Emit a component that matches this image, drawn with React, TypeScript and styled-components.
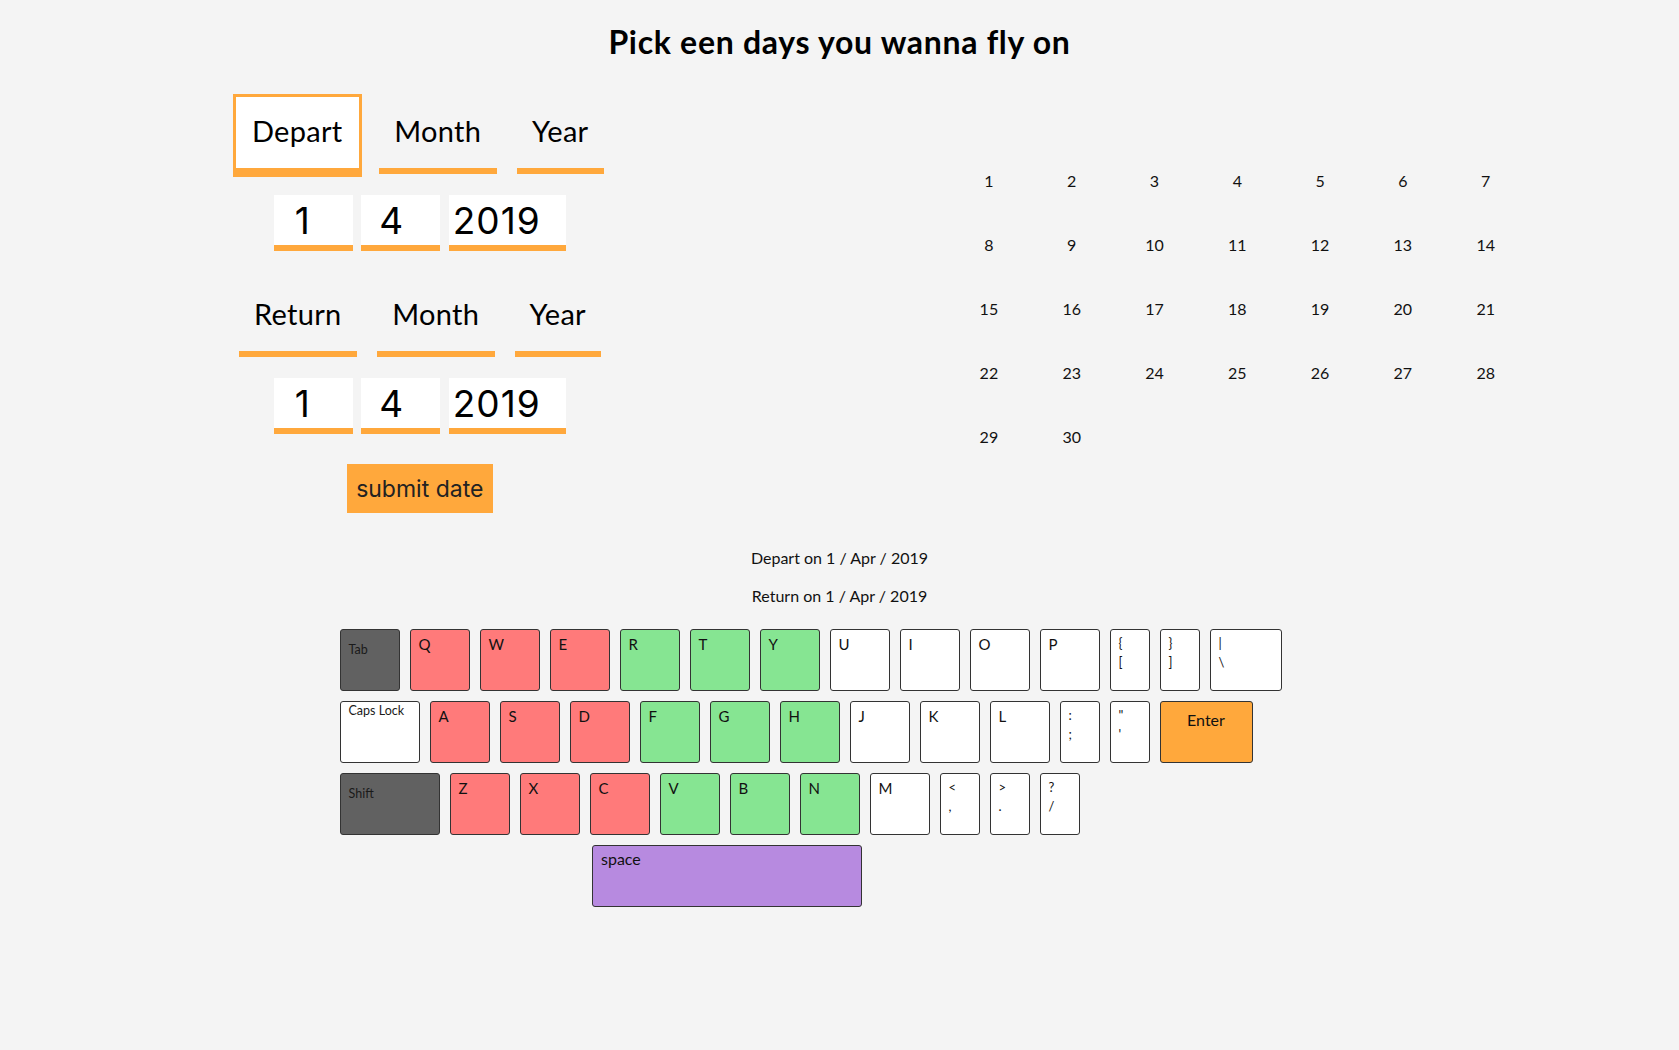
import styled, { createGlobalStyle } from 'styled-components'

const orange = '#ffa83c'

type Tone = 'dark' | 'red' | 'green' | 'white' | 'orange' | 'purple'

const toneColors: Record<Tone, string> = {
  dark: '#616161',
  red: '#ff7a7a',
  green: '#86e592',
  white: '#ffffff',
  orange: orange,
  purple: '#b78ae0',
}

const GlobalStyle = createGlobalStyle`
  body {
    margin: 0;
    background: #f4f4f4;
    font-family: Lato, 'Noto Sans', sans-serif;
    color: #111;
  }
`

const Page = styled.div`
  min-height: 1050px;
`

const Title = styled.h1`
  margin: 22px 0 0;
  font-size: 32px;
  line-height: 40px;
  font-weight: 700;
  letter-spacing: 0.7px;
  text-align: center;
  color: #000;
`

const Main = styled.div`
  display: grid;
  grid-template-columns: 1fr 1fr;
  margin-top: 35px;
`

const FormColumn = styled.div`
  display: flex;
  flex-direction: column;
  align-items: center;
`

const Group = styled.div`
  display: flex;
  flex-direction: column;
  align-items: center;
  gap: 21px;

  & + & {
    margin-top: 29px;
  }
`

const LabelRow = styled.div`
  display: flex;
  gap: 20px;
`

const Label = styled.div<{ $w: number; $active?: boolean }>`
  box-sizing: border-box;
  width: ${(p) => p.$w}px;
  padding: 14px 0 18px;
  font-size: 29px;
  line-height: 39px;
  letter-spacing: 0.3px;
  text-align: center;
  color: #000;
  border-bottom: 6px solid ${orange};
  background: ${(p) => (p.$active ? '#fff' : 'transparent')};
  outline: ${(p) => (p.$active ? `3px solid ${orange}` : 'none')};
`

const InputRow = styled.div`
  display: flex;
  gap: 8.5px;
`

const DateInput = styled.input<{ $w: number; $pad: number }>`
  box-sizing: border-box;
  width: ${(p) => p.$w}px;
  height: 56px;
  padding: 0 0 0 ${(p) => p.$pad}px;
  border: none;
  border-bottom: 6px solid ${orange};
  border-radius: 0;
  background: #fff;
  font-family: Inter, 'Liberation Sans', sans-serif;
  font-size: 37px;
  letter-spacing: 1px;
  color: #000;
  outline: none;
`

const SubmitButton = styled.button`
  margin-top: 30px;
  width: 146px;
  height: 49px;
  padding: 0;
  border: none;
  background: ${orange};
  font-family: Inter, 'Liberation Sans', sans-serif;
  font-size: 23px;
  color: #222;
  cursor: pointer;
`

const Calendar = styled.div`
  align-self: start;
  display: grid;
  grid-template-columns: repeat(7, 82.8px);
  grid-auto-rows: 64px;
  margin: 51px 0 0 108px;
`

const Day = styled.div`
  display: flex;
  align-items: center;
  justify-content: center;
  font-size: 16px;
  color: #111;
`

const Summary = styled.div`
  display: flex;
  flex-direction: column;
  align-items: center;
  gap: 16px;
  margin-top: 34px;
`

const SummaryLine = styled.p`
  margin: 0;
  font-size: 16px;
  line-height: 22px;
`

const Keyboard = styled.div`
  width: 1010px;
  margin: 17px auto 0;
`

const KeyRow = styled.div`
  display: flex;
`

const Key = styled.div<{ $w: number; $tone: Tone; $offset?: number }>`
  box-sizing: border-box;
  width: ${(p) => p.$w}px;
  height: 62px;
  margin: 5px;
  margin-left: ${(p) => p.$offset ?? 5}px;
  border: 1px solid #333;
  border-radius: 3px;
  background: ${(p) => toneColors[p.$tone]};
  color: #111;
`

const Letter = styled.div`
  padding: 4px 8px;
  font-size: 15px;
  line-height: 20px;
`

const SpecialLabel = styled.div<{ $top: number }>`
  padding: ${(p) => p.$top}px 8px 0;
  font-size: 12.5px;
  line-height: 16px;
  color: #1a1a1a;
`

const DualLabel = styled.div`
  padding: 4px 8px;
  font-size: 13px;
  line-height: 19px;
  white-space: pre;
`

const EnterLabel = styled.div`
  padding-top: 8px;
  font-size: 16px;
  line-height: 20px;
  text-align: center;
`

const SpaceLabel = styled.div`
  padding: 3px 8px;
  font-size: 16px;
  line-height: 20px;
`

type KeyDef = {
  label: string
  tone: Tone
  w?: number
  kind?: 'letter' | 'special' | 'specialTop' | 'dual' | 'enter' | 'space'
  offset?: number
}

const letters = (chars: string, tone: Tone): KeyDef[] =>
  chars.split('').map((c) => ({ label: c, tone }))

const rows: KeyDef[][] = [
  [
    { label: 'Tab', tone: 'dark', kind: 'special' },
    ...letters('QWE', 'red'),
    ...letters('RTY', 'green'),
    ...letters('UIOP', 'white'),
    { label: '{\n[', tone: 'white', w: 40, kind: 'dual' },
    { label: '}\n]', tone: 'white', w: 40, kind: 'dual' },
    { label: '|\n\\', tone: 'white', w: 72, kind: 'dual' },
  ],
  [
    { label: 'Caps Lock', tone: 'white', w: 80, kind: 'specialTop' },
    ...letters('ASD', 'red'),
    ...letters('FGH', 'green'),
    ...letters('JKL', 'white'),
    { label: ':\n;', tone: 'white', w: 40, kind: 'dual' },
    { label: '"\n\'', tone: 'white', w: 40, kind: 'dual' },
    { label: 'Enter', tone: 'orange', w: 93, kind: 'enter' },
  ],
  [
    { label: 'Shift', tone: 'dark', w: 100, kind: 'special' },
    ...letters('ZXC', 'red'),
    ...letters('VBN', 'green'),
    ...letters('M', 'white'),
    { label: '<\n,', tone: 'white', w: 40, kind: 'dual' },
    { label: '>\n.', tone: 'white', w: 40, kind: 'dual' },
    { label: '?\n/', tone: 'white', w: 40, kind: 'dual' },
  ],
  [{ label: 'space', tone: 'purple', w: 270, kind: 'space', offset: 257.5 }],
]

const renderLabel = (k: KeyDef) => {
  switch (k.kind) {
    case 'special':
      return <SpecialLabel $top={12}>{k.label}</SpecialLabel>
    case 'specialTop':
      return <SpecialLabel $top={1}>{k.label}</SpecialLabel>
    case 'dual':
      return <DualLabel>{k.label}</DualLabel>
    case 'enter':
      return <EnterLabel>{k.label}</EnterLabel>
    case 'space':
      return <SpaceLabel>{k.label}</SpaceLabel>
    default:
      return <Letter>{k.label}</Letter>
  }
}

const days = Array.from({ length: 30 }, (_, i) => i + 1)

interface DateFieldsProps {
  title: string
  widths: [number, number, number]
  active?: boolean
}

const DateFields = ({ title, widths, active }: DateFieldsProps) => (
  <Group>
    <LabelRow>
      <Label $w={widths[0]} $active={active}>
        {title}
      </Label>
      <Label $w={widths[1]}>Month</Label>
      <Label $w={widths[2]}>Year</Label>
    </LabelRow>
    <InputRow>
      <DateInput $w={79} $pad={21} value="1" readOnly />
      <DateInput $w={79} $pad={18} value="4" readOnly />
      <DateInput $w={117} $pad={4} value="2019" readOnly />
    </InputRow>
  </Group>
)

export default function App() {
  return (
    <Page>
      <GlobalStyle />
      <Title>Pick een days you wanna fly on</Title>
      <Main>
        <FormColumn>
          <DateFields title="Depart" widths={[123, 118, 87]} active />
          <DateFields title="Return" widths={[118, 118, 86]} />
          <SubmitButton>submit date</SubmitButton>
        </FormColumn>
        <Calendar>
          {days.map((d) => (
            <Day key={d}>{d}</Day>
          ))}
        </Calendar>
      </Main>
      <Summary>
        <SummaryLine>Depart on 1 / Apr / 2019</SummaryLine>
        <SummaryLine>Return on 1 / Apr / 2019</SummaryLine>
      </Summary>
      <Keyboard>
        {rows.map((row, i) => (
          <KeyRow key={i}>
            {row.map((k) => (
              <Key key={k.label} $w={k.w ?? 60} $tone={k.tone} $offset={k.offset}>
                {renderLabel(k)}
              </Key>
            ))}
          </KeyRow>
        ))}
      </Keyboard>
    </Page>
  )
}
